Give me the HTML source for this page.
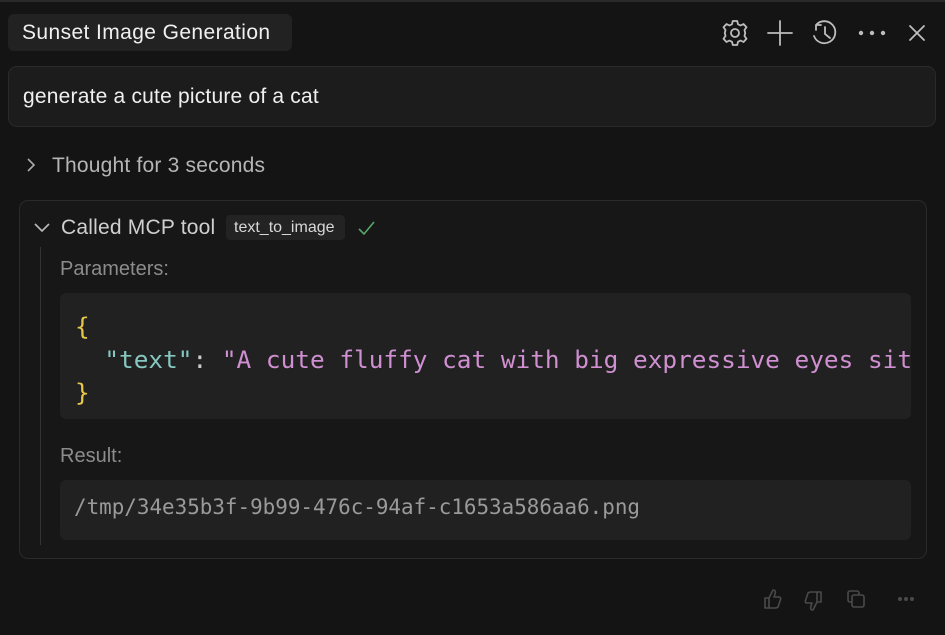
<!DOCTYPE html>
<html><head><style>
body{margin:0;width:945px;height:635px;background:#141414;font-family:"Liberation Sans","Noto Sans CJK SC",sans-serif;position:relative;overflow:hidden;color:#ddd}
.a{position:absolute}
.mono{font-family:"DejaVu Sans Mono","Liberation Mono",monospace}
</style></head><body>
<div class="a" style="left:0;top:0;width:945px;height:2px;background:#2a2a2a"></div>
<div class="a" style="left:8px;top:14px;width:284px;height:37px;background:#222;border-radius:6px"></div>
<div class="a" style="left:22px;top:21px;font-size:21px;color:#f0f0f0;letter-spacing:0.4px">Sunset Image Generation</div>
<svg class="a" style="left:718px;top:16px" width="215" height="34" viewBox="0 0 215 34" fill="none" stroke="#bdbdbd" stroke-width="1.8" stroke-linecap="round">
<g transform="translate(17,17)"><circle r="4"/><path d="M-2.2,-12 L2.2,-12 L3,-8.8 L5.5,-7.5 L8.5,-9 L11.5,-5.8 L9.5,-3 L10.2,0 L9.5,3 L11.5,5.8 L8.5,9 L5.5,7.5 L3,8.8 L2.2,12 L-2.2,12 L-3,8.8 L-5.5,7.5 L-8.5,9 L-11.5,5.8 L-9.5,3 L-10.2,0 L-9.5,-3 L-11.5,-5.8 L-8.5,-9 L-5.5,-7.5 L-3,-8.8Z" stroke-linejoin="round"/></g>
<path d="M62,5 V29 M50,17 H74"/>
<path d="M98,9 A11,11 0 1 1 96,20 M98,9 L98,14 M98,9 L103,9 M107,11 V18 L112,22"/>
<circle cx="143" cy="17" r="1.3" fill="#bdbdbd"/><circle cx="154" cy="17" r="1.3" fill="#bdbdbd"/><circle cx="165" cy="17" r="1.3" fill="#bdbdbd"/>
<path d="M192,10 L206,24 M206,10 L192,24"/>
</svg>
<div class="a" style="left:8px;top:66px;width:926px;height:59px;background:#1c1c1c;border:1px solid #2a2a2a;border-radius:9px"></div>
<div class="a" style="left:23px;top:85px;font-size:21px;color:#f0f0f0;letter-spacing:0.2px">generate a cute picture of a cat</div>
<svg class="a" style="left:24px;top:157px" width="14" height="16" fill="none" stroke="#aaa" stroke-width="1.6"><path d="M4,2 L10,8 L4,14"/></svg>
<div class="a" style="left:52px;top:154px;font-size:21px;color:#b5b5b5;letter-spacing:0.2px">Thought for 3 seconds</div>
<div class="a" style="left:19px;top:200px;width:906px;height:357px;background:#171717;border:1px solid #2a2a2a;border-radius:9px"></div>
<svg class="a" style="left:33px;top:221px" width="18" height="14" fill="none" stroke="#bbb" stroke-width="1.6"><path d="M2,3 L9,10 L16,3"/></svg>
<div class="a" style="left:61px;top:216px;font-size:21px;color:#cfcfcf;letter-spacing:0.2px">Called MCP tool</div>
<div class="a" style="left:226px;top:215px;width:119px;height:25px;background:#232323;border-radius:4px"></div>
<div class="a" style="left:234px;top:219px;font-size:16px;color:#d8d8d8">text_to_image</div>
<svg class="a" style="left:357px;top:219px" width="20" height="18" fill="none" stroke="#5aa56a" stroke-width="1.6"><path d="M2,10 L7,15 L17,3"/></svg>
<div class="a" style="left:40px;top:247px;width:1px;height:298px;background:#333"></div>
<div class="a" style="left:60px;top:258px;font-size:20px;color:#8c8c8c">Parameters:</div>
<div class="a" style="left:60px;top:293px;width:851px;height:126px;background:#212121;border-radius:6px;overflow:hidden">
<div class="mono" style="position:absolute;left:15px;top:17px;font-size:24.4px;line-height:33px;white-space:pre;color:#ccc"><span style="color:#e8c84a">{</span>
  <span style="color:#86c8c0">"text"</span>: <span style="color:#cf8fd0">"A cute fluffy cat with big expressive eyes sitting</span>
<span style="color:#e8c84a">}</span></div></div>
<div class="a" style="left:60px;top:445px;font-size:20px;color:#8c8c8c">Result:</div>
<div class="a" style="left:60px;top:480px;width:851px;height:60px;background:#212121;border-radius:6px"></div>
<div class="a mono" style="left:74px;top:495px;font-size:20.9px;color:#9a9a9a;white-space:pre">/tmp/34e35b3f-9b99-476c-94af-c1653a586aa6.png</div>
<svg class="a" style="left:760px;top:586px" width="160" height="28" fill="none" stroke="#4a4a4a" stroke-width="1.6" stroke-linejoin="round">
<path d="M5,12 h4 v10 h-4z M9,12 L13,4 c2,0 3,1 2,4 l-1,3 h5 c2,0 2,2 1,4 l-2,6 c-1,1 -2,1 -3,1 h-6"/>
<g transform="translate(66,28) scale(-1,-1)"><path d="M5,12 h4 v10 h-4z M9,12 L13,4 c2,0 3,1 2,4 l-1,3 h5 c2,0 2,2 1,4 l-2,6 c-1,1 -2,1 -3,1 h-6"/></g>
<rect x="88" y="5" width="11" height="11" rx="2"/><rect x="92" y="9" width="12" height="12" rx="2" fill="#141414"/>
<circle cx="140" cy="13" r="1.2" fill="#4a4a4a"/><circle cx="146" cy="13" r="1.2" fill="#4a4a4a"/><circle cx="152" cy="13" r="1.2" fill="#4a4a4a"/>
</svg>
</body></html>
